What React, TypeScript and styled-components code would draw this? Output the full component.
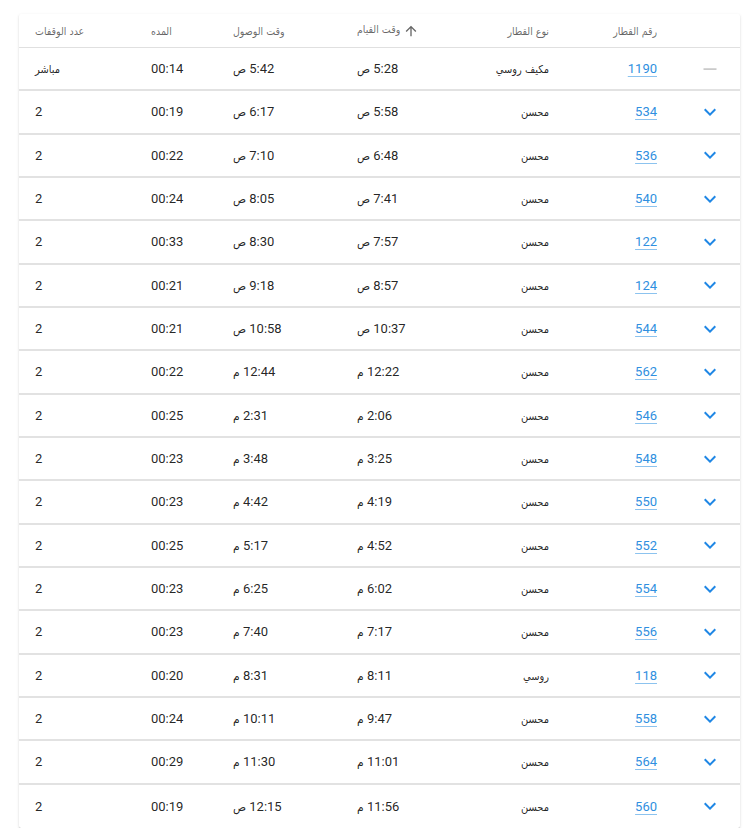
import React from 'react';
import styled, { createGlobalStyle } from 'styled-components';

type Trip = {
  no: string;
  kind: string;
  dep: string;
  arr: string;
  dur: string;
  stops: string;
  direct?: boolean;
};

const trips: Trip[] = [
  { no: '1190', kind: 'مكيف روسي', dep: '5:28', arr: '5:42', dur: '00:14', stops: 'مباشر', direct: true },
  { no: '534', kind: 'محسن', dep: '5:58', arr: '6:17', dur: '00:19', stops: '2' },
  { no: '536', kind: 'محسن', dep: '6:48', arr: '7:10', dur: '00:22', stops: '2' },
  { no: '540', kind: 'محسن', dep: '7:41', arr: '8:05', dur: '00:24', stops: '2' },
  { no: '122', kind: 'محسن', dep: '7:57', arr: '8:30', dur: '00:33', stops: '2' },
  { no: '124', kind: 'محسن', dep: '8:57', arr: '9:18', dur: '00:21', stops: '2' },
  { no: '544', kind: 'محسن', dep: '10:37', arr: '10:58', dur: '00:21', stops: '2' },
  { no: '562', kind: 'محسن', dep: '12:22 م', arr: '12:44 م', dur: '00:22', stops: '2' },
  { no: '546', kind: 'محسن', dep: '2:06 م', arr: '2:31 م', dur: '00:25', stops: '2' },
  { no: '548', kind: 'محسن', dep: '3:25 م', arr: '3:48 م', dur: '00:23', stops: '2' },
  { no: '550', kind: 'محسن', dep: '4:19 م', arr: '4:42 م', dur: '00:23', stops: '2' },
  { no: '552', kind: 'محسن', dep: '4:52 م', arr: '5:17 م', dur: '00:25', stops: '2' },
  { no: '554', kind: 'محسن', dep: '6:02 م', arr: '6:25 م', dur: '00:23', stops: '2' },
  { no: '556', kind: 'محسن', dep: '7:17 م', arr: '7:40 م', dur: '00:23', stops: '2' },
  { no: '118', kind: 'روسي', dep: '8:11 م', arr: '8:31 م', dur: '00:20', stops: '2' },
  { no: '558', kind: 'محسن', dep: '9:47 م', arr: '10:11 م', dur: '00:24', stops: '2' },
  { no: '564', kind: 'محسن', dep: '11:01 م', arr: '11:30 م', dur: '00:29', stops: '2' },
  { no: '560', kind: 'محسن', dep: '11:56 م', arr: '12:15', dur: '00:19', stops: '2' },
];

// times without a suffix are morning
const split = (v: string) => {
  const [time, sfx] = v.split(' ');
  return { time, sfx: sfx ?? 'ص' };
};

const GlobalStyle = createGlobalStyle`
  body {
    margin: 0;
    background: #ffffff;
    font-family: Roboto, "DejaVu Sans", sans-serif;
  }
`;

const Page = styled.div`
  padding: 14px 3px 0 19px;
`;

const Card = styled.div`
  direction: rtl;
  width: 721px;
  background: #fff;
  border-radius: 2px;
  box-shadow: 0 2px 1px -1px rgba(0, 0, 0, 0.2), 0 1px 1px 0 rgba(0, 0, 0, 0.14),
    0 1px 3px 0 rgba(0, 0, 0, 0.12);
`;

// rtl order: expand, number, type, departure, arrival, duration, stops
const Row = styled.div<{ $head?: boolean }>`
  display: grid;
  grid-template-columns: 67px 108px 95px 129px 124px 82px 116px;
  align-items: center;
  height: ${(p) => (p.$head ? '34px' : '43.33px')};
  box-sizing: border-box;
  border-bottom: ${(p) => (p.$head ? '1px solid #e0e0e0' : '2px solid #e2e2e2')};
  &:last-child {
    border-bottom: none;
  }
`;

const Cell = styled.div<{ $align: 'left' | 'right' | 'center'; $head?: boolean }>`
  text-align: ${(p) => p.$align};
  padding: ${(p) => (p.$align === 'left' ? '0 0 0 16px' : p.$align === 'right' ? '0 16px 0 0' : '0')};
  font-size: ${(p) => (p.$head ? '12px' : '13px')};
  color: ${(p) => (p.$head ? 'rgba(0, 0, 0, 0.6)' : 'rgba(0, 0, 0, 0.87)')};
  white-space: nowrap;
`;

// arabic words: the fallback arabic face runs wide, so it gets a narrower face and size
const Ar = styled.span<{ $size?: number }>`
  font-family: "DejaVu Sans Condensed", "DejaVu Sans", sans-serif;
  font-stretch: condensed;
  font-size: ${(p) => p.$size ?? 11}px;
  font-weight: 300;
`;

const SortLabel = styled.span`
  display: inline-flex;
  align-items: center;
  gap: 3px;
  svg {
    fill: rgba(0, 0, 0, 0.6);
    margin-top: 4px;
  }
`;

const TrainLink = styled.a`
  color: #2f8fe0;
  text-decoration: underline;
  text-underline-offset: 3px;
  text-decoration-color: #8cc3ef;
`;

const IconBox = styled.span<{ $muted?: boolean }>`
  display: flex;
  justify-content: center;
  padding-left: 7px;
  svg {
    fill: ${(p) => (p.$muted ? '#c4c4c4' : '#1f87e5')};
  }
`;

const ArrowUp = () => (
  <svg width="16" height="16" viewBox="0 0 24 24">
    <path d="M4 12l1.41 1.41L11 7.83V20h2V7.83l5.58 5.59L20 12l-8-8-8 8z" />
  </svg>
);

const ExpandMore = () => (
  <svg width="24" height="24" viewBox="0 0 24 24">
    <path d="M16.59 8.59L12 13.17 7.41 8.59 6 10l6 6 6-6z" />
  </svg>
);

const Remove = () => (
  <svg width="24" height="24" viewBox="0 0 24 24">
    <path d="M18.5 12.9H5.5v-1.6h13v1.6z" />
  </svg>
);

const Time = ({ value }: { value: string }) => {
  const { time, sfx } = split(value);
  return (
    <>
      {time} <Ar $size={12}>{sfx}</Ar>
    </>
  );
};

const App = () => {
  return (
    <>
      <GlobalStyle />
      <Page>
        <Card>
          <Row $head>
            <Cell $align="center" $head />
            <Cell $align="right" $head>
              <Ar $size={10.5}>رقم القطار</Ar>
            </Cell>
            <Cell $align="right" $head>
              <Ar $size={10.5}>نوع القطار</Ar>
            </Cell>
            <Cell $align="left" $head>
              <SortLabel>
                <ArrowUp />
                <Ar $size={10.5}>وقت القيام</Ar>
              </SortLabel>
            </Cell>
            <Cell $align="left" $head>
              <Ar $size={10.5}>وقت الوصول</Ar>
            </Cell>
            <Cell $align="left" $head>
              <Ar $size={10.5}>المده</Ar>
            </Cell>
            <Cell $align="left" $head>
              <Ar $size={10.5}>عدد الوقفات</Ar>
            </Cell>
          </Row>
          {trips.map((t) => (
            <Row key={t.no}>
              <Cell $align="center">
                <IconBox $muted={t.direct}>{t.direct ? <Remove /> : <ExpandMore />}</IconBox>
              </Cell>
              <Cell $align="right">
                <TrainLink href="#">{t.no}</TrainLink>
              </Cell>
              <Cell $align="right">
                <Ar>{t.kind}</Ar>
              </Cell>
              <Cell $align="left">
                <Time value={t.dep} />
              </Cell>
              <Cell $align="left">
                <Time value={t.arr} />
              </Cell>
              <Cell $align="left">{t.dur}</Cell>
              <Cell $align="left">{t.direct ? <Ar>{t.stops}</Ar> : t.stops}</Cell>
            </Row>
          ))}
        </Card>
      </Page>
    </>
  );
};

export default App;
